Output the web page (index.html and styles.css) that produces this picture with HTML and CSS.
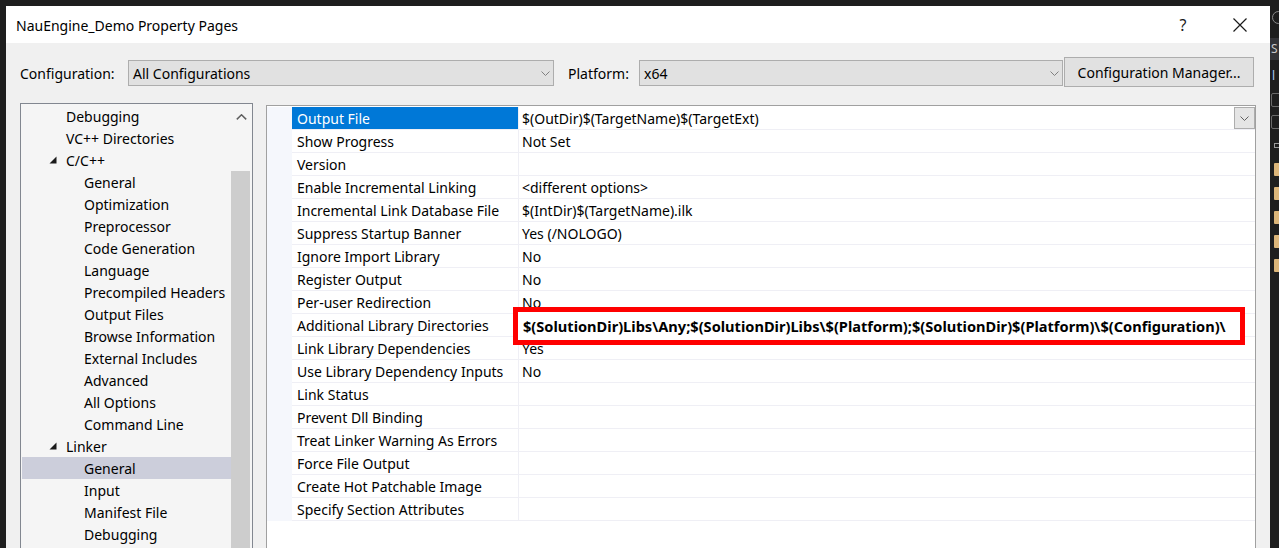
FILE: index.html
```html
<!DOCTYPE html>
<html lang="en">
<head>
<meta charset="utf-8">
<title>NauEngine_Demo Property Pages</title>
<link rel="stylesheet" href="styles.css">
</head>
<body>
<div class="screen">
  <div class="dialog">
    <div class="titlebar">
      <span class="title">NauEngine_Demo Property Pages</span>
      <span class="cap-btn help">?</span>
      <span class="cap-btn close"><svg width="16" height="16" viewBox="0 0 16 16"><path d="M1.5 1.5 L14.5 14.5 M14.5 1.5 L1.5 14.5" stroke="#1a1a1a" stroke-width="1.2" fill="none"/></svg></span>
    </div>

    <div class="toolbar">
      <span class="lbl lbl-config">Configuration:</span>
      <div class="combo combo-config"><span class="combo-text">All Configurations</span><svg class="chev" width="9" height="5" viewBox="0 0 9 5"><path d="M0.5 0.5 L4.5 4.5 L8.5 0.5" stroke="#808080" stroke-width="1" fill="none"/></svg></div>
      <span class="lbl lbl-platform">Platform:</span>
      <div class="combo combo-platform"><span class="combo-text">x64</span><svg class="chev" width="9" height="5" viewBox="0 0 9 5"><path d="M0.5 0.5 L4.5 4.5 L8.5 0.5" stroke="#808080" stroke-width="1" fill="none"/></svg></div>
      <button class="btn">Configuration Manager...</button>
    </div>

    <div class="main">
      <div class="tree">
        <ul class="tree-list">
          <li class="node top">Debugging</li>
          <li class="node top">VC++ Directories</li>
          <li class="node top exp"><svg class="tri" width="8" height="8" viewBox="0 0 8 8"><polygon points="7.5,0.5 7.5,7.5 0.5,7.5" fill="#1a1a1a"/></svg>C/C++</li>
          <li class="node child">General</li>
          <li class="node child">Optimization</li>
          <li class="node child">Preprocessor</li>
          <li class="node child">Code Generation</li>
          <li class="node child">Language</li>
          <li class="node child">Precompiled Headers</li>
          <li class="node child">Output Files</li>
          <li class="node child">Browse Information</li>
          <li class="node child">External Includes</li>
          <li class="node child">Advanced</li>
          <li class="node child">All Options</li>
          <li class="node child">Command Line</li>
          <li class="node top exp"><svg class="tri" width="8" height="8" viewBox="0 0 8 8"><polygon points="7.5,0.5 7.5,7.5 0.5,7.5" fill="#1a1a1a"/></svg>Linker</li>
          <li class="node child selected">General</li>
          <li class="node child">Input</li>
          <li class="node child">Manifest File</li>
          <li class="node child">Debugging</li>
        </ul>
        <div class="scrollbar">
          <div class="sb-up"><svg width="11" height="6" viewBox="0 0 11 6"><path d="M0.8 5.4 L5.5 0.8 L10.2 5.4" stroke="#606060" stroke-width="1.5" fill="none"/></svg></div>
          <div class="sb-thumb"></div>
        </div>
      </div>

      <div class="grid">
        <div class="rows">
          <div class="row"><div class="gutter"></div><div class="name sel">Output File</div><div class="value"><span class="val-text">$(OutDir)$(TargetName)$(TargetExt)</span><span class="dd"><svg width="9" height="5" viewBox="0 0 9 5"><path d="M0.5 0.5 L4.5 4.5 L8.5 0.5" stroke="#606060" stroke-width="1" fill="none"/></svg></span></div></div>
          <div class="row"><div class="gutter"></div><div class="name">Show Progress</div><div class="value">Not Set</div></div>
          <div class="row"><div class="gutter"></div><div class="name">Version</div><div class="value"></div></div>
          <div class="row"><div class="gutter"></div><div class="name">Enable Incremental Linking</div><div class="value">&lt;different options&gt;</div></div>
          <div class="row"><div class="gutter"></div><div class="name">Incremental Link Database File</div><div class="value">$(IntDir)$(TargetName).ilk</div></div>
          <div class="row"><div class="gutter"></div><div class="name">Suppress Startup Banner</div><div class="value">Yes (/NOLOGO)</div></div>
          <div class="row"><div class="gutter"></div><div class="name">Ignore Import Library</div><div class="value">No</div></div>
          <div class="row"><div class="gutter"></div><div class="name">Register Output</div><div class="value">No</div></div>
          <div class="row"><div class="gutter"></div><div class="name">Per-user Redirection</div><div class="value">No</div></div>
          <div class="row"><div class="gutter"></div><div class="name">Additional Library Directories</div><div class="value"></div></div>
          <div class="row"><div class="gutter"></div><div class="name">Link Library Dependencies</div><div class="value">Yes</div></div>
          <div class="row"><div class="gutter"></div><div class="name">Use Library Dependency Inputs</div><div class="value">No</div></div>
          <div class="row"><div class="gutter"></div><div class="name">Link Status</div><div class="value"></div></div>
          <div class="row"><div class="gutter"></div><div class="name">Prevent Dll Binding</div><div class="value"></div></div>
          <div class="row"><div class="gutter"></div><div class="name">Treat Linker Warning As Errors</div><div class="value"></div></div>
          <div class="row"><div class="gutter"></div><div class="name">Force File Output</div><div class="value"></div></div>
          <div class="row"><div class="gutter"></div><div class="name">Create Hot Patchable Image</div><div class="value"></div></div>
          <div class="row"><div class="gutter"></div><div class="name">Specify Section Attributes</div><div class="value"></div></div>
        </div>
        <div class="highlight">$(SolutionDir)Libs\Any;$(SolutionDir)Libs\$(Platform);$(SolutionDir)$(Platform)\$(Configuration)\</div>
      </div>
    </div>
  </div>

  <div class="ide-strip">
    <div class="ide-circle"></div>
    <div class="ide-search"><span class="ide-txt">S</span></div>
    <div class="ide-sol"><span class="ide-txt">l</span></div>
    <div class="ide-box"></div>
    <div class="ide-box ide-box2"></div>
    <div class="ide-small"></div>
    <div class="ide-folder ide-folder-first"></div>
    <div class="ide-folder"></div>
    <div class="ide-folder"></div>
    <div class="ide-folder"></div>
    <div class="ide-folder"></div>
  </div>
</div>
</body>
</html>
```

FILE: styles.css
```css
* { box-sizing: border-box; }
html, body { margin: 0; padding: 0; }
body {
  background: #1e1e1e;
  font-family: "Noto Sans", "Open Sans", sans-serif;
  font-size: 14px;
  color: #000;
}
.screen {
  display: flex;
  width: 1279px;
  height: 548px;
  padding: 6px 0 0 6px;
  overflow: hidden;
}
.dialog {
  flex: none;
  width: 1264px;
  height: 542px;
  background: #f0f0f0;
  display: flex;
  flex-direction: column;
  overflow: hidden;
}

/* title bar */
.titlebar {
  flex: none;
  height: 37px;
  background: #fff;
  display: flex;
  align-items: center;
  padding: 1px 15px 0 10px;
}
.title { flex: 1; font-size: 14px; color: #000; }
.cap-btn {
  width: 30px;
  height: 30px;
  display: flex;
  align-items: center;
  justify-content: center;
}
.help { font-size: 16px; color: #1a1a1a; margin-right: 27px; }

/* toolbar */
.toolbar {
  flex: none;
  display: flex;
  align-items: flex-start;
  padding: 14px 0 0 14px;
  height: 44px;
}
.lbl {
  height: 26px;
  line-height: 26px;
  margin-top: 3px;
  padding-top: 1px;
  white-space: nowrap;
}
.lbl-config { width: 108px; }
.lbl-platform { width: 71px; margin-left: 14px; }
.combo {
  height: 26px;
  margin-top: 3px;
  background: #e1e1e1;
  border: 1px solid #adadad;
  display: flex;
  align-items: center;
  padding: 1px 3px 0 4px;
}
.combo-text { flex: 1; }
.chev { margin-top: -1px; }
.combo-config { width: 426px; }
.combo-platform { width: 424px; }
.btn {
  width: 190px;
  height: 30px;
  margin-left: 1px;
  background: #e1e1e1;
  border: 1px solid #adadad;
  font-family: inherit;
  font-size: 14px;
  color: #000;
  padding: 1px 0 0;
}

/* main area */
.main {
  flex: none;
  display: flex;
  align-items: flex-start;
  padding: 0 14px;
  margin-top: 16px;
}
.tree {
  flex: none;
  width: 233px;
  height: 470px;
  border: 1px solid #828790;
  background: #f5f5f5;
  display: flex;
}
.tree-list {
  list-style: none;
  margin: 0;
  padding: 1px 0 0 1px;
  width: 210px;
}
.node {
  height: 22px;
  line-height: 22px;
  padding-top: 1px;
  white-space: nowrap;
  display: flex;
  align-items: center;
}
.node.top { padding-left: 44px; }
.node.top.exp { padding-left: 27px; }
.node.child { padding-left: 62px; }
.node.selected { background: #cccedb; }
.tri { margin-right: 9px; margin-top: -2px; }
.scrollbar {
  width: 20px;
  display: flex;
  flex-direction: column;
}
.sb-up {
  height: 24px;
  display: flex;
  align-items: center;
  justify-content: center;
  padding-top: 1px;
}
.sb-thumb {
  margin-top: 43px;
  width: 19px;
  flex: 1;
  background: #cdcdcd;
}

.grid {
  flex: none;
  position: relative;
  width: 990px;
  height: 470px;
  margin: 2px 0 0 13px;
  border: 1px solid #a0a0a0;
  background: #fff;
  padding-top: 1px;
}
.row {
  display: flex;
  height: 23px;
}
.gutter {
  width: 25px;
  background: #f5f7fc;
}
.name, .value {
  height: 23px;
  line-height: 22px;
  padding-top: 1px;
  border-bottom: 1px solid #efeff5;
  white-space: nowrap;
}
.name {
  width: 227px;
  padding-left: 5px;
  border-right: 1px solid #efeff5;
}
.name.sel { background: #0078d7; color: #fff; }
.value {
  flex: 1;
  padding-left: 3px;
  display: flex;
}
.val-text { flex: 1; }
.dd {
  width: 21px;
  height: 22px;
  margin-top: -1px;
  background: #e5e5e5;
  border: 1px solid #adadad;
  display: flex;
  align-items: center;
  justify-content: center;
}

.highlight {
  position: absolute;
  left: 246px;
  top: 201px;
  width: 732px;
  height: 38px;
  border: 5px solid #ff0000;
  background: #fff;
  padding: 1px 0 0 5px;
  font-weight: bold;
  font-size: 14.6px;
  line-height: 26px;
  white-space: nowrap;
  overflow: hidden;
}

/* IDE strip behind the dialog */
.ide-strip {
  flex: none;
  width: 9px;
  height: 548px;
  margin-top: -6px;
  display: flex;
  flex-direction: column;
  overflow: hidden;
}
.ide-circle {
  width: 13px;
  height: 13px;
  margin: 11px 0 0 2px;
  border: 1.5px solid #8a8a8a;
  border-radius: 50%;
  flex: none;
}
.ide-search {
  margin-top: 14px;
  height: 22px;
  background: #333337;
  color: #c8c8c8;
  font-size: 12px;
  line-height: 22px;
  padding-left: 1px;
  flex: none;
  white-space: nowrap;
}
.ide-sol {
  margin-top: 8px;
  color: #a8c6f0;
  font-size: 12px;
  line-height: 16px;
  padding-left: 2px;
  flex: none;
  white-space: nowrap;
}
.ide-box {
  margin: 9px 0 0 1px;
  width: 14px;
  height: 14px;
  border: 1px solid #6a6a6a;
  border-radius: 2px;
  flex: none;
}
.ide-box2 { margin-top: 8px; }
.ide-small {
  margin: 14px 0 0 4px;
  width: 8px;
  height: 5px;
  border: 1px solid #9a9a9a;
  flex: none;
}
.ide-folder {
  margin: 11px 0 0 4px;
  width: 10px;
  height: 13px;
  background: #dcb67a;
  border-radius: 1px;
  flex: none;
}
.ide-folder-first { margin-top: 15px; }
```
